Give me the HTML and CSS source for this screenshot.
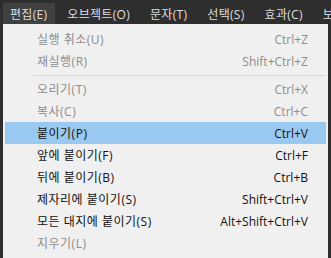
FILE: index.html
```html
<!DOCTYPE html>
<html lang="ko">
<head>
    <meta charset="UTF-8">
    <title>편집 메뉴</title>
    <link rel="stylesheet" href="styles.css">
</head>
<body>
    <div class="menubar">
        <div class="menubar-item active">편집(E)</div>
        <div class="menubar-item">오브젝트(O)</div>
        <div class="menubar-item">문자(T)</div>
        <div class="menubar-item">선택(S)</div>
        <div class="menubar-item">효과(C)</div>
        <div class="menubar-item">보기(V)</div>
    </div>
    <div class="dropdown">
        <div class="item disabled"><span class="label">실행 취소(U)</span><span>Ctrl+Z</span></div>
        <div class="item disabled"><span class="label">재실행(R)</span><span>Shift+Ctrl+Z</span></div>
        <div class="separator"></div>
        <div class="item disabled"><span class="label">오리기(T)</span><span>Ctrl+X</span></div>
        <div class="item disabled"><span class="label">복사(C)</span><span>Ctrl+C</span></div>
        <div class="item selected"><span class="label">붙이기(P)</span><span>Ctrl+V</span></div>
        <div class="item"><span class="label">앞에 붙이기(F)</span><span>Ctrl+F</span></div>
        <div class="item"><span class="label">뒤에 붙이기(B)</span><span>Ctrl+B</span></div>
        <div class="item"><span class="label">제자리에 붙이기(S)</span><span>Shift+Ctrl+V</span></div>
        <div class="item"><span class="label">모든 대지에 붙이기(S)</span><span>Alt+Shift+Ctrl+V</span></div>
        <div class="item disabled"><span class="label">지우기(L)</span><span></span></div>
    </div>
</body>
</html>
```

FILE: styles.css
```css
body {
    margin: 0;
    background-color: #2e2e2e;
    font-family: 'Open Sans', 'Noto Sans CJK KR', sans-serif;
    font-size: 12px;
    overflow: hidden;
}
.menubar {
    display: flex;
    height: 24px;
    padding-left: 3px;
    gap: 5px;
    overflow: hidden;
}
.menubar-item {
    flex-shrink: 0;
    display: flex;
    align-items: center;
    margin-top: 3px;
    padding: 0 8px 0 7px;
    color: #dedede;
    white-space: nowrap;
    letter-spacing: 0.3px;
}
.menubar-item.active {
    background-color: #404040;
}
.dropdown {
    margin-left: 3px;
    width: 321px;
    padding: 4px 2px;
    background-color: #f0f0f0;
}
.item {
    display: flex;
    justify-content: space-between;
    align-items: center;
    height: 22px;
    padding: 0 18px 0 32px;
    color: #111;
}
.item .label {
    letter-spacing: 0.5px;
}
.item.disabled {
    color: #8d8d8d;
}
.item.selected {
    background-color: #99c8f0;
}
.separator {
    height: 1px;
    margin: 3px 0 2px 28px;
    background-color: #d7d7d7;
}
```
